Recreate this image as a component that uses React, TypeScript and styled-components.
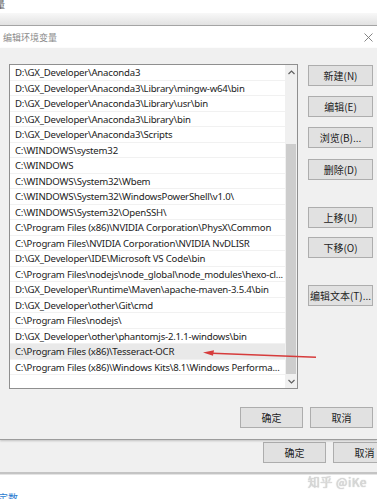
import React from 'react';
import styled, { createGlobalStyle } from 'styled-components';

const Global = createGlobalStyle`
  html, body { margin: 0; padding: 0; background: #fff; }
  body {
    width: 377px; height: 499px; overflow: hidden;
    font-family: "Noto Sans", "Noto Sans CJK SC", sans-serif;
  }
`;

const Page = styled.div`
  position: relative;
  width: 377px;
  height: 499px;
  display: flex;
  flex-direction: column;
  overflow: hidden;
`;

const TopStrip = styled.div`
  height: 13px;
  background: #fff;
  overflow: hidden;
  font-family: "Noto Sans CJK SC", sans-serif;
  font-size: 9px;
  line-height: 9px;
  color: #555;
`;

const Cropped = styled.span`
  display: inline-block;
  margin-left: -4px;
  margin-top: -1px;
`;

const ParentBand = styled.div`
  height: 12px;
  background: linear-gradient(#f8f8f8, #e2e2e2);
  border-bottom: 1px solid #a4a4a4;
`;

const TitleBar = styled.div`
  height: 22px;
  background: #fff;
  display: flex;
  align-items: center;
  justify-content: space-between;
  padding: 0 4px 0 3px;
`;

const Title = styled.span`
  font-family: "Noto Sans CJK SC", sans-serif;
  font-size: 9px;
  color: #8a8a8a;
`;

const DialogBody = styled.div`
  height: 392px;
  box-sizing: border-box;
  background: #f0f0f0;
  padding: 16px 4px 12px 9px;
  display: flex;
  flex-direction: column;
  border-bottom: 1px solid #9c9c9c;
  box-shadow: 0 1px 2px rgba(0,0,0,0.2);
  position: relative;
  z-index: 1;
`;

const MainRow = styled.div`
  display: flex;
  gap: 10px;
`;

const ListBox = styled.div`
  width: 289px;
  height: 325px;
  box-sizing: border-box;
  border: 1px solid #8f8f8f;
  background: #fff;
  display: flex;
`;

const Rows = styled.div`
  flex: 1;
  min-width: 0;
  display: flex;
  flex-direction: column;
`;

const Row = styled.div<{ $sel?: boolean }>`
  height: 15.5px;
  box-sizing: border-box;
  padding-left: 5px;
  font-family: "Noto Sans", sans-serif;
  font-size: 9.6px;
  letter-spacing: -0.2px;
  line-height: 15.5px;
  color: #222;
  white-space: nowrap;
  overflow: hidden;
  border-bottom: 1px solid #f1f1f1;
  background: ${p => (p.$sel ? '#e9e9e9' : '#fff')};
`;

const ScrollBar = styled.div`
  width: 12px;
  background: #f0f0f0;
  display: flex;
  flex-direction: column;
`;

const ScrollArrow = styled.div`
  height: 14px;
  display: flex;
  align-items: center;
  justify-content: center;
`;

const Track = styled.div`
  flex: 1;
  display: flex;
  flex-direction: column;
  padding-top: 65px;
`;

const Thumb = styled.div`
  flex: 1;
  background: #cdcdcd;
  margin: 0 1px;
`;

const ButtonCol = styled.div`
  display: flex;
  flex-direction: column;
  width: 65px;
`;

const Btn = styled.div<{ $mt?: number; $w?: number }>`
  width: ${p => p.$w ?? 65}px;
  height: 21px;
  flex: none;
  box-sizing: border-box;
  margin-top: ${p => p.$mt ?? 0}px;
  background: #e1e1e1;
  border: 1px solid #adadad;
  display: flex;
  align-items: center;
  justify-content: center;
  font-family: "Noto Sans CJK SC", sans-serif;
  font-size: 10px;
  color: #222;
  white-space: nowrap;
`;

const FooterRow = styled.div`
  display: flex;
  justify-content: flex-end;
  gap: 7px;
  margin-top: 18px;
`;

const ParentArea = styled.div`
  height: 34px;
  background: #f0f0f0;
  display: flex;
  justify-content: flex-end;
  gap: 7px;
  padding-top: 2px;
  box-sizing: border-box;
  margin-right: -19px;
  border-bottom: 2px solid #c4c4c4;
`;

const WhiteArea = styled.div`
  flex: 1;
  background: #fff;
  border-top: 1px solid #e4e4e4;
  position: relative;
  overflow: hidden;
`;

const BlueText = styled.span`
  position: absolute;
  left: -2px;
  top: 15px;
  font-family: "Noto Sans CJK SC", sans-serif;
  font-size: 10px;
  color: #2a7bd0;
`;

const Watermark = styled.span`
  position: absolute;
  right: 10px;
  top: -2px;
  font-family: "Noto Sans CJK SC", sans-serif;
  font-size: 12px;
  color: #dadada;
  letter-spacing: 0.5px;
  text-shadow: 0 0 1px #aaa;
`;

const Arrow = styled.svg`
  position: absolute;
  left: 0;
  top: 0;
  pointer-events: none;
  z-index: 5;
`;

const rows = [
  'D:\\GX_Developer\\Anaconda3',
  'D:\\GX_Developer\\Anaconda3\\Library\\mingw-w64\\bin',
  'D:\\GX_Developer\\Anaconda3\\Library\\usr\\bin',
  'D:\\GX_Developer\\Anaconda3\\Library\\bin',
  'D:\\GX_Developer\\Anaconda3\\Scripts',
  'C:\\WINDOWS\\system32',
  'C:\\WINDOWS',
  'C:\\WINDOWS\\System32\\Wbem',
  'C:\\WINDOWS\\System32\\WindowsPowerShell\\v1.0\\',
  'C:\\WINDOWS\\System32\\OpenSSH\\',
  'C:\\Program Files (x86)\\NVIDIA Corporation\\PhysX\\Common',
  'C:\\Program Files\\NVIDIA Corporation\\NVIDIA NvDLISR',
  'D:\\GX_Developer\\IDE\\Microsoft VS Code\\bin',
  'C:\\Program Files\\nodejs\\node_global\\node_modules\\hexo-cl...',
  'D:\\GX_Developer\\Runtime\\Maven\\apache-maven-3.5.4\\bin',
  'D:\\GX_Developer\\other\\Git\\cmd',
  'C:\\Program Files\\nodejs\\',
  'D:\\GX_Developer\\other\\phantomjs-2.1.1-windows\\bin',
  'C:\\Program Files (x86)\\Tesseract-OCR',
  'C:\\Program Files (x86)\\Windows Kits\\8.1\\Windows Performa...',
];

const Chevron = ({ up }: { up?: boolean }) => (
  <svg width="7" height="5" viewBox="0 0 7 5">
    <path
      d={up ? 'M0.5 4 L3.5 1 L6.5 4' : 'M0.5 1 L3.5 4 L6.5 1'}
      fill="none"
      stroke="#606060"
      strokeWidth="1.2"
    />
  </svg>
);

export default function App() {
  return (
    <Page>
      <Global />
      <TopStrip>
        <Cropped>量</Cropped>
      </TopStrip>
      <ParentBand />
      <TitleBar>
        <Title>编辑环境变量</Title>
        <svg width="9" height="9" viewBox="0 0 9 9">
          <path d="M0.5 0.5 L8.5 8.5 M8.5 0.5 L0.5 8.5" stroke="#777" strokeWidth="0.9" />
        </svg>
      </TitleBar>
      <DialogBody>
        <MainRow>
          <ListBox>
            <Rows>
              {rows.map((r, i) => (
                <Row key={i} $sel={i === 18}>
                  {r}
                </Row>
              ))}
            </Rows>
            <ScrollBar>
              <ScrollArrow>
                <Chevron up />
              </ScrollArrow>
              <Track>
                <Thumb />
              </Track>
              <ScrollArrow>
                <Chevron />
              </ScrollArrow>
            </ScrollBar>
          </ListBox>
          <ButtonCol>
            <Btn $mt={1}>新建(N)</Btn>
            <Btn $mt={10}>编辑(E)</Btn>
            <Btn $mt={10}>浏览(B)...</Btn>
            <Btn $mt={11}>删除(D)</Btn>
            <Btn $mt={27}>上移(U)</Btn>
            <Btn $mt={9}>下移(O)</Btn>
            <Btn $mt={27}>编辑文本(T)...</Btn>
          </ButtonCol>
        </MainRow>
        <FooterRow>
          <Btn $w={63}>确定</Btn>
          <Btn $w={63}>取消</Btn>
        </FooterRow>
      </DialogBody>
      <ParentArea>
        <Btn $w={63}>确定</Btn>
        <Btn $w={63}>取消</Btn>
      </ParentArea>
      <WhiteArea>
        <BlueText>定数</BlueText>
        <Watermark>知乎 @iKe</Watermark>
      </WhiteArea>
      <Arrow width="377" height="499" viewBox="0 0 377 499">
        <path d="M316 357.2 L212 353.2" stroke="#d63b3b" strokeWidth="1.6" fill="none" />
        <path d="M203 352.6 L214 350.2 L213 355.8 Z" fill="#d63b3b" />
      </Arrow>
    </Page>
  );
}
